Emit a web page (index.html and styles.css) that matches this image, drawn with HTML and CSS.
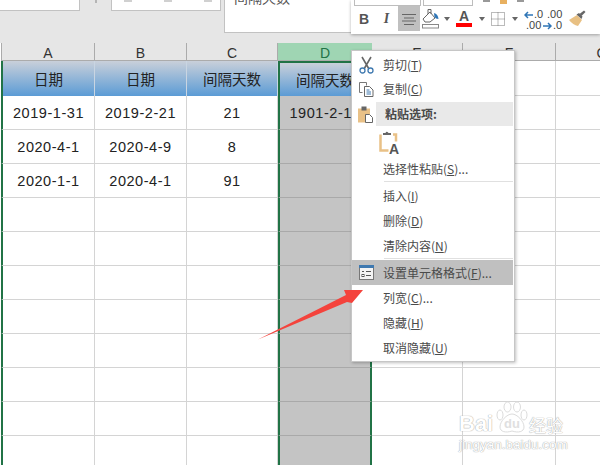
FILE: index.html
```html
<!DOCTYPE html>
<html lang="zh-CN">
<head>
<meta charset="utf-8">
<title>Sheet</title>
<link rel="stylesheet" href="styles.css">
</head>
<body>
<div class="page">
  <div class="ribbon">
    <div class="rb rb-a"></div>
    <div class="rb-tick"></div>
    <div class="rb rb-b"><i class="frag"></i><i class="frag"></i><i class="frag"></i></div>
    <div class="rb rb-c"><span class="rb-clip">间隔天数</span></div>
  </div>

  <div class="sheet">
    <div class="ch">A</div><div class="ch">B</div><div class="ch">C</div><div class="ch ch-sel">D</div><div class="ch">E</div><div class="ch">F</div><div class="ch ch-last">G</div>

    <div class="c hd first">日期</div><div class="c hd">日期</div><div class="c hd">间隔天数</div><div class="c hd sel sel-top">间隔天数</div><div class="c"></div><div class="c"></div><div class="c"></div>

    <div class="c first">2019-1-31</div><div class="c">2019-2-21</div><div class="c">21</div><div class="c sel">1901-2-10</div><div class="c"></div><div class="c"></div><div class="c"></div>
    <div class="c first">2020-4-1</div><div class="c">2020-4-9</div><div class="c">8</div><div class="c sel"></div><div class="c"></div><div class="c"></div><div class="c"></div>
    <div class="c first">2020-1-1</div><div class="c">2020-4-1</div><div class="c">91</div><div class="c sel"></div><div class="c"></div><div class="c"></div><div class="c"></div>
    <div class="c first"></div><div class="c"></div><div class="c"></div><div class="c sel"></div><div class="c"></div><div class="c"></div><div class="c"></div>
    <div class="c first"></div><div class="c"></div><div class="c"></div><div class="c sel"></div><div class="c"></div><div class="c"></div><div class="c"></div>
    <div class="c first"></div><div class="c"></div><div class="c"></div><div class="c sel"></div><div class="c"></div><div class="c"></div><div class="c"></div>
    <div class="c first"></div><div class="c"></div><div class="c"></div><div class="c sel"></div><div class="c"></div><div class="c"></div><div class="c"></div>
    <div class="c first"></div><div class="c"></div><div class="c"></div><div class="c sel"></div><div class="c"></div><div class="c"></div><div class="c"></div>
    <div class="c first"></div><div class="c"></div><div class="c"></div><div class="c sel"></div><div class="c"></div><div class="c"></div><div class="c"></div>
    <div class="c first"></div><div class="c"></div><div class="c"></div><div class="c sel"></div><div class="c"></div><div class="c"></div><div class="c"></div>
    <div class="c first"></div><div class="c"></div><div class="c"></div><div class="c sel"></div><div class="c"></div><div class="c"></div><div class="c"></div>
  </div>

  <div class="mini">
    <div class="mini-top"><div class="mini-box mb1"></div><div class="mini-box mb2"></div><i class="mfrag"></i><i class="mfrag mfrag-o"></i><i class="mfrag"></i></div>
    <div class="mini-row">
      <span></span>
      <span class="tb tb-b">B</span>
      <span class="tb tb-i">I</span>
      <span class="tb tb-on">
        <svg width="14" height="12" viewBox="0 0 14 12"><path d="M0 1.500h14M2 5h10M0 8h14M2 11.500h10" stroke="#666" stroke-width="1" fill="none"/></svg>
      </span>
      <span class="tb">
        <svg width="18" height="21" viewBox="0 0 18 21"><path d="M1 11 L8 4 L13 10 L8 14 H3 Z" fill="#fff" stroke="#666"/><path d="M6 6 V1.500 H9 V6" fill="none" stroke="#666"/><path d="M12 5 q4 1 4.500 6 q-3 0 -4 -2z" fill="#2e75b6"/><rect x="0.500" y="16.500" width="16" height="3.500" fill="#fff" stroke="#888"/></svg>
      </span>
      <span class="tb"><i class="caret"></i></span>
      <span class="tb tb-a">A</span>
      <span class="tb"><i class="caret"></i></span>
      <span class="tb">
        <svg width="14" height="14" viewBox="0 0 14 14"><path d="M.5 .5h13v13h-13zM7 .5v13M.5 7h13" fill="none" stroke="#777" stroke-dasharray="1 1"/></svg>
      </span>
      <span class="tb"><i class="caret"></i></span>
      <span class="tb tb-dec">
        <svg class="num-ar" width="9" height="8" viewBox="0 0 9 8"><path d="M9 4H1M4 1 1 4l3 3" fill="none" stroke="#2e75b6" stroke-width="1.500"/></svg><span class="n1">.0</span><span class="n2">.00</span>
      </span>
      <span class="tb tb-dec">
        <span class="n3">.00</span><svg class="num-ar2" width="9" height="8" viewBox="0 0 9 8"><path d="M0 4h8M5 1l3 3-3 3" fill="none" stroke="#2e75b6" stroke-width="1.500"/></svg><span class="n4">.0</span>
      </span>
      <span class="tb">
        <svg width="17" height="17" viewBox="0 0 17 17"><path d="M0 10 L8 5 L13 10 L9 16 Q4 15 0 10Z" fill="#e8c083"/><path d="M7.500 4.500 L10 3 L13.500 6.500 L12.500 9Z" fill="#666"/><path d="M10.500 4 L15 0.500 L16.500 2 L12.500 6Z" fill="#666"/></svg>
      </span>
    </div>
  </div>

  <div class="menu">
    <div class="mi mi-s">
      <span class="mi-ic">
        <svg width="15" height="18" viewBox="0 0 15 18"><path d="M3 1 L10 13M12 1 L5 13" stroke="#666" stroke-width="1.600" fill="none"/><circle cx="3.500" cy="14.500" r="2.500" fill="none" stroke="#3f79b0" stroke-width="1.300"/><circle cx="11.500" cy="14.500" r="2.500" fill="none" stroke="#3f79b0" stroke-width="1.300"/></svg>
      </span>
      <span>剪切(<u>T</u>)</span>
    </div>
    <div class="mi mi-s">
      <span class="mi-ic">
        <svg width="15" height="15" viewBox="0 0 15 15"><path d="M.5 .5h7v3M.5 .5v10h3" fill="none" stroke="#777"/><path d="M5.500 4.500h5l3.500 3.500v6.500h-8.500z" fill="#fff" stroke="#666"/><path d="M7.500 8h3M7.500 10h4.500M7.500 12h4.500" stroke="#3f79b0"/></svg>
      </span>
      <span>复制(<u>C</u>)</span>
    </div>
    <div class="mi mi-s mi-head">
      <span class="mi-ic">
        <svg width="16" height="17" viewBox="0 0 16 17"><rect x="0" y="2.500" width="12" height="14" fill="#e9c187"/><rect x="3.500" y="0.500" width="5" height="4" fill="#666"/><path d="M7.500 8.500h4l3 3v5h-7z" fill="#fff" stroke="#666"/></svg>
      </span>
      <span class="mi-headtxt">粘贴选项:</span>
    </div>
    <div class="mi-paste">
      <svg width="22" height="24" viewBox="0 0 22 24"><path d="M1.500 4.500v16h8M14 4.500h3v7" fill="none" stroke="#e9c187" stroke-width="2.500"/><path d="M4 5V3h2.500q1-2.500 3 0H12v2z" fill="#666"/><text x="10" y="24" class="paste-a">A</text></svg>
    </div>
    <div class="mi mi-s">
      <span class="mi-ic"></span><span>选择性粘贴(<u>S</u>)...</span>
    </div>
    <div class="sep sep-b"></div>
    <div class="mi"><span class="mi-ic"></span><span>插入(<u>I</u>)</span></div>
    <div class="mi"><span class="mi-ic"></span><span>删除(<u>D</u>)</span></div>
    <div class="mi"><span class="mi-ic"></span><span>清除内容(<u>N</u>)</span></div>
    <div class="sep sep-b"></div>
    <div class="mi mi-on">
      <span class="mi-ic">
        <svg width="15" height="15" viewBox="0 0 15 15"><rect x="0.500" y="0.500" width="14" height="14" fill="#f4f4f4" stroke="#777"/><rect x="0" y="0" width="15" height="3" fill="#3f79b0"/><path d="M3 6.500h2M7 6.500h5M7 10.500h5" stroke="#555"/><rect x="3" y="9.500" width="2" height="2" fill="none" stroke="#555"/></svg>
      </span>
      <span>设置单元格格式(<u>F</u>)...</span>
    </div>
    <div class="mi"><span class="mi-ic"></span><span>列宽(<u>C</u>)...</span></div>
    <div class="mi"><span class="mi-ic"></span><span>隐藏(<u>H</u>)</span></div>
    <div class="mi"><span class="mi-ic"></span><span>取消隐藏(<u>U</u>)</span></div>
  </div>

  <svg class="arrow" width="110" height="54" viewBox="258 289 110 54"><polygon points="258,339.500 346,295 344,290 363,290 352,303 347,302" fill="#f4433c"/></svg>

  <div class="wm">
    <div class="wm-top">
      <span class="wm-bai">Bai</span>
      <span class="wm-paw">
        <svg width="32" height="33" viewBox="0 0 32 33"><g fill="#fff" stroke="#dcdcdc"><ellipse cx="4" cy="14" rx="3" ry="5"/><ellipse cx="11.500" cy="6" rx="3.500" ry="5"/><ellipse cx="21" cy="6" rx="3.500" ry="5"/><ellipse cx="28" cy="14" rx="3" ry="5"/><path d="M16 13c5 0 12 7 12 13 0 5-6 6-12 4-6 2-12 1-12-4 0-6 7-13 12-13z"/></g></svg>
        <span class="wm-du">du</span>
      </span>
      <span class="wm-jy">经验</span>
    </div>
    <div class="wm-url">jingyan.baidu.com</div>
  </div>
</div>
</body>
</html>
```

FILE: styles.css
```css
* { box-sizing: border-box; }
html, body { margin: 0; padding: 0; background: #fff; }
.page {
  position: relative;
  width: 600px;
  height: 465px;
  overflow: hidden;
  font-family: "Noto Sans CJK SC", "Liberation Sans", sans-serif;
}

/* ribbon */
.ribbon {
  height: 43px;
  background: #e6e6e6;
  display: flex;
  align-items: flex-start;
}
.rb { background: #fff; border: 1px solid #c2c2c2; border-top: 0; overflow: hidden; }
.rb-a { width: 81px; height: 11px; margin-left: -1px; }
.rb-tick { width: 2px; height: 3px; background: #b5b5b5; margin: 0 14px 0 15px; }
.rb-b {
  width: 110px; height: 11px;
  display: flex; gap: 32px; padding-left: 12px;
}
.frag { display: block; width: 8px; height: 2px; background: #d0d0d0; }
.rb-c { width: 130px; height: 33px; margin-left: 3px; padding-left: 9px; }
.rb-clip {
  display: block; margin-top: -13px;
  font-size: 14px; line-height: 20px; color: #555;
}

/* sheet */
.sheet {
  display: grid;
  padding-left: 1px;
  grid-template-columns: 94px 92px 91px 94px 91px 93px 92px;
  grid-template-rows: 18px 35px repeat(11, 34px);
  font-family: "Liberation Sans", "Noto Sans CJK SC", sans-serif;
}
.ch {
  background: #e6e6e6;
  border-right: 1px solid #ababab;
  border-bottom: 1px solid #ababab;
  display: flex; align-items: center; justify-content: center;
  font-size: 14px; color: #333;
  padding-top: 2px;
}
.ch:first-child { border-left: 1px solid #ababab; }
.ch-sel { background: #9fd5b3; color: #217346; border-right: 0; }
.ch-last { border-right: 0; }

.c {
  display: flex; align-items: center; justify-content: center;
  border-right: 1px solid #d4d4d4;
  border-bottom: 1px solid #d4d4d4;
  font-size: 14.5px; letter-spacing: .55px; color: #222;
  white-space: nowrap; overflow: hidden;
}
.first { border-left: 2px solid #217346; }
.hd {
  background: linear-gradient(#c9d0da, #5b9bd5);
  border-right: 1px solid #c9d5e2;
  border-bottom: 0;
  font-family: "Noto Sans CJK SC", sans-serif;
  letter-spacing: 0;
}
.sel {
  background: #c4c4c4;
  border-left: 2px solid #217346;
  border-right: 2px solid #217346;
  border-bottom: 1px solid #a9a9a9;
}
.sel-top {
  background: linear-gradient(#c9d0da, #5b9bd5);
  border-top: 2px solid #217346;
  border-bottom: 0;
}

/* mini toolbar */
.mini {
  position: absolute; left: 351px; top: 0;
  width: 249px; height: 34px;
  background: #fff;
  box-shadow: 0 1px 3px rgba(0,0,0,.3);
}
.mini-top { display: flex; height: 6px; padding-left: 3px; gap: 2px; align-items: flex-start; }
.mini-box { height: 6px; border: 1px solid #bdbdbd; border-top: 0; }
.mb1 { width: 67px; }
.mb2 { width: 50px; }
.mfrag { display: block; width: 7px; height: 2px; background: #999; margin-left: 8px; }
.mfrag-o { background: #e8b060; height: 4px; }
.mini-row {
  display: grid;
  grid-template-columns: 2px 22px 23px 22px 22px 9px 26px 9px 24px 10px 23px 21px 26px;
  height: 25px;
}
.tb { display: flex; align-items: center; justify-content: center; position: relative; }
.tb-b { font: bold 14px "Liberation Sans", sans-serif; color: #555; }
.tb-i { font: italic bold 14px "Liberation Serif", serif; color: #555; }
.tb-on { background: #c0c0c0; }
.tb-a {
  font: bold 14px "Liberation Sans", sans-serif; color: #555;
  align-items: flex-start; line-height: 17px; padding-top: 2px;
}
.tb-a::after {
  content: ""; position: absolute; left: 5px; right: 5px; top: 17px; height: 4px; background: #f00;
}
.caret { width: 0; height: 0; border: 3.5px solid transparent; border-top: 4px solid #666; border-bottom: 0; }
.tb-dec { font: 10px/9px "Liberation Sans", sans-serif; color: #444; }
.num-ar { position: absolute; left: 4px; top: 5px; }
.n1 { position: absolute; left: 14px; top: 4px; font-size: 11px; }
.n2 { position: absolute; left: 6px; top: 15px; font-size: 11px; }
.n3 { position: absolute; left: 4px; top: 4px; font-size: 11px; }
.num-ar2 { position: absolute; left: 0; top: 16px; }
.n4 { position: absolute; left: 10px; top: 15px; font-size: 11px; }

/* context menu */
.menu {
  position: absolute; left: 351px; top: 50px;
  width: 164px; height: 312px;
  background: #fff;
  border: 1px solid #c6c6c6;
  box-shadow: 1px 1px 3px rgba(0,0,0,.25);
  padding-top: 2px;
  font-size: 12px;
  color: #4a4a4a;
}
.mi { display: flex; align-items: center; height: 25px; white-space: nowrap; line-height: 16px; }
.mi-s { height: 24px; }
.mi-ic { width: 31px; padding-left: 2px; display: flex; align-items: center; justify-content: center; flex: none; padding-right: 5px; }
.mi-head { margin-top: 1px; }
.mi-headtxt {
  flex: 1; align-self: stretch;
  display: flex; align-items: center;
  background: #e9e9e9;
  font-weight: 700;
  margin-left: -7px; padding-left: 9px; margin-right: 1px;
}
.mi-paste { height: 31px; padding: 4px 0 0 27px; }
.paste-a { font: bold 14px "Liberation Sans", sans-serif; fill: #555; }
.sep { height: 1px; margin-left: 32px; margin-right: 1px; background: #e0e0e0; }
.sep-b { margin-bottom: 1px; }
.mi-on { background: #c0c0c0; margin-right: 1px; }
u { text-underline-offset: 1px; }

/* arrow */
.arrow { position: absolute; left: 258px; top: 289px; }

/* watermark */
.wm {
  position: absolute; left: 459px; top: 400px; width: 110px;
  color: #fff;
}
.wm-top { display: flex; align-items: flex-end; height: 35px; }
.wm-bai {
  font: bold 22px/22px "Liberation Sans", sans-serif;
  text-shadow: 0 0 1px #aaa, 0 0 1px #aaa;
  width: 37px;
}
.wm-paw { position: relative; width: 33px; height: 34px; display: block; }
.wm-du {
  position: absolute; left: 8px; top: 16px;
  font: bold 13px/13px "Liberation Sans", sans-serif;
  color: #e0e0e0;
}
.wm-jy {
  font-size: 17px; line-height: 21px; font-family: "Noto Sans CJK SC", sans-serif;
  text-shadow: 0 0 1px #aaa, 0 0 1px #aaa;
}
.wm-url {
  font: 13.500px/14px "Liberation Sans", sans-serif;
  margin-top: 3px;
  text-shadow: 0 0 1px #aaa, 0 0 1px #aaa;
}
```
